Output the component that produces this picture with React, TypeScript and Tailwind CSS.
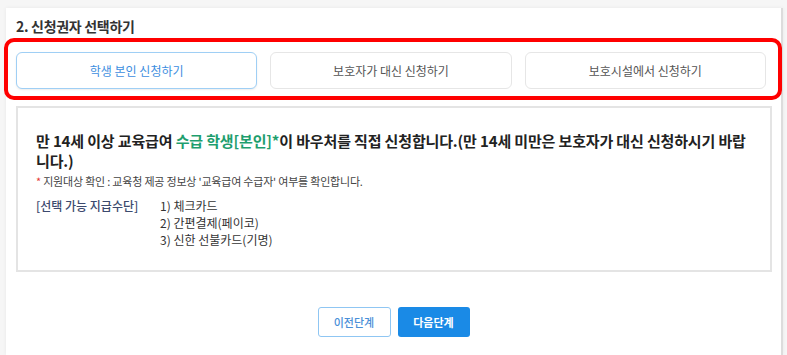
import React, { useState } from "react";

const options = ["학생 본인 신청하기", "보호자가 대신 신청하기", "보호시설에서 신청하기"];

const App: React.FC = () => {
  const [selected, setSelected] = useState(0);

  return (
    <div
      className="w-[787px] h-[355px] overflow-hidden bg-[#f6f6f6] pl-[6px] pt-[8px]"
      style={{ fontFamily: '"Noto Sans CJK KR", "Noto Sans", sans-serif' }}
    >
      <div className="w-[777px] h-[347px] bg-white border-r-2 border-[#dcdcdc] shadow-[0_0_4px_rgba(0,0,0,0.06)] px-[10px]">
        <h3 className="pt-[9px] text-[14px] leading-[18px] font-bold text-[#333] tracking-[-0.3px]">
          2. 신청권자 선택하기
        </h3>

        {/* red highlight */}
        <div className="mt-[3px] -ml-[12px] -mr-[11px] border-4 border-[#ff0000] rounded-[10px] pl-[8px] pr-[12px] pt-[10px] pb-[7px]">
          <div className="grid grid-cols-3 gap-[13px]">
            {options.map((label, i) => (
              <button
                key={label}
                onClick={() => setSelected(i)}
                className={
                  i === selected
                    ? "h-[37px] rounded-[6px] border border-[#9fcff5] bg-white text-[12px] text-[#3d8ee0] shadow-[0_1px_2px_rgba(0,0,0,0.08)]"
                    : "h-[37px] rounded-[6px] border border-[#e6e6e6] bg-white text-[12px] text-[#555]"
                }
              >
                {label}
              </button>
            ))}
          </div>
        </div>

        <div className="mt-[6px] w-[756px] h-[166px] border-2 border-[#e4e4e4] pl-[18px] pr-[16px] pt-[23px]">
          <p className="text-[15px] leading-[20px] font-bold text-[#222] tracking-[-0.15px]">
            만 14세 이상 교육급여 <span className="text-[#1e9e6e]">수급 학생[본인]*</span>이 바우처를 직접 신청합니다.(만 14세 미만은 보호자가 대신 신청하시기 바랍니다.)
          </p>
          <p className="mt-[2px] text-[11px] leading-[16px] text-[#444] tracking-[-0.2px]">
            <span className="text-[#e53935]">*</span> 지원대상 확인 : 교육청 제공 정보상 '교육급여 수급자' 여부를 확인합니다.
          </p>
          <div className="mt-[8px] flex text-[12px] leading-[17px]">
            <div className="w-[124px] text-[#3c4a6e] font-medium">[선택 가능 지급수단]</div>
            <div className="text-[#333]">
              <div>1) 체크카드</div>
              <div>2) 간편결제(페이코)</div>
              <div>3) 신한 선불카드(기명)</div>
            </div>
          </div>
        </div>

        <div className="mt-[35px] flex justify-center gap-[7px]">
          <button className="w-[73px] h-[30px] rounded-[3px] border border-[#8fc6f3] bg-white text-[11px] font-medium text-[#4a8fd8]">
            이전단계
          </button>
          <button className="w-[72px] h-[30px] rounded-[3px] bg-[#1a8ae6] text-[11px] font-bold text-white">
            다음단계
          </button>
        </div>
      </div>
    </div>
  );
};

export default App;
